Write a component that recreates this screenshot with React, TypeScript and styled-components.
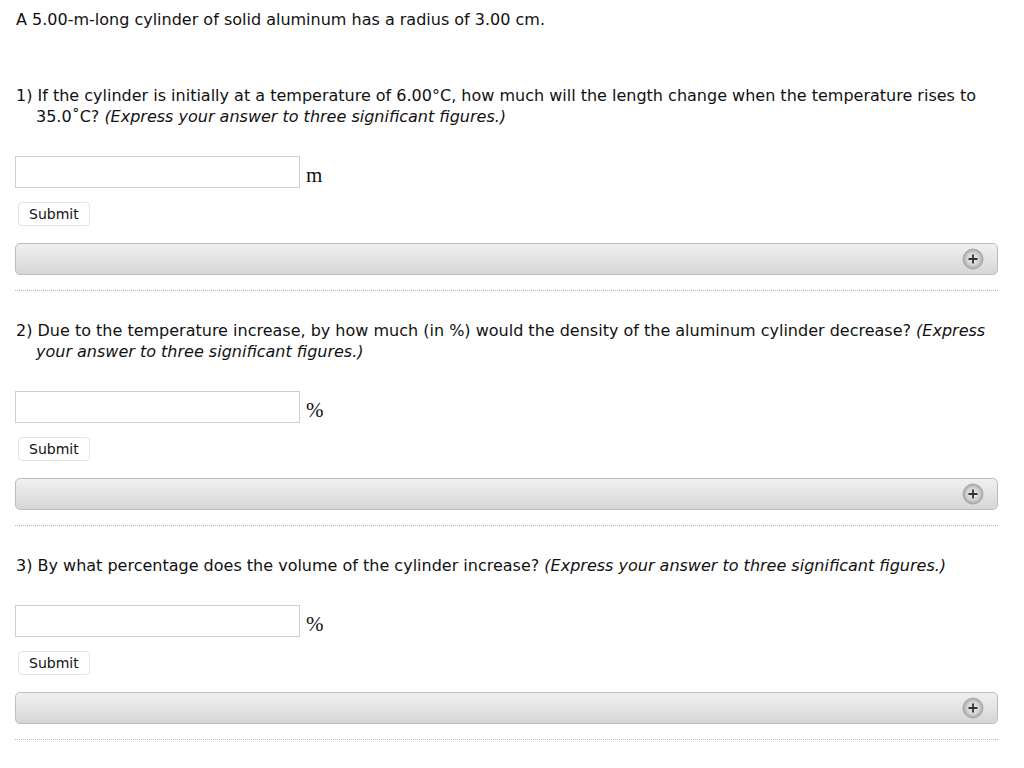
import React from "react";
import styled, { createGlobalStyle } from "styled-components";

const Global = createGlobalStyle`
  html, body { margin: 0; padding: 0; background: #fff; }
  body { font-family: "DejaVu Sans", Verdana, sans-serif; color: #111; }
`;

const Page = styled.div`
  width: 983px;
  padding: 9px 0 0 15px;
  font-family: "DejaVu Sans", sans-serif;
  font-size: 16px;
`;

const Intro = styled.p`
  margin: 0 0 55px 1px;
  line-height: 21px;
`;

const Question = styled.section`
  display: flex;
  flex-direction: column;
`;

const Prompt = styled.p`
  margin: 0 0 29px 1px;
  padding-left: 20px;
  text-indent: -20px;
  line-height: 21px;
  em { font-style: italic; }
`;

const AnswerRow = styled.div`
  display: flex;
  align-items: center;
  gap: 6px;
`;

const Field = styled.input`
  width: 285px;
  height: 32px;
  box-sizing: border-box;
  border: 1px solid #cfcfcf;
  background: #fff;
  margin: 0;
`;

const Unit = styled.span`
  font-family: "Liberation Serif", serif;
  font-size: 21px;
  margin-top: 6px;
`;

const SubmitButton = styled.button`
  align-self: flex-start;
  margin: 14px 0 0 3px;
  height: 24px;
  padding: 0 10px;
  border: 1px solid #e2e2e2;
  border-radius: 4px;
  background: #fff;
  font-family: "DejaVu Sans", sans-serif;
  font-size: 14px;
  color: #111;
`;

const Bar = styled.div`
  margin-top: 17px;
  height: 32px;
  box-sizing: border-box;
  border: 1px solid #bdbdbd;
  border-radius: 5px;
  background: linear-gradient(#f0f0f0, #d6d6d6);
  display: flex;
  align-items: center;
  justify-content: flex-end;
  padding-right: 13px;
`;

const Divider = styled.hr`
  margin: 15px 0 29px;
  border: 0;
  border-top: 1px dotted #b5b5b5;
  height: 0;
`;

const PlusIcon = () => (
  <svg width="22" height="22" viewBox="0 0 22 22">
    <defs>
      <radialGradient id="pg" cx="50%" cy="50%" r="55%">
        <stop offset="0%" stopColor="#ededed" />
        <stop offset="55%" stopColor="#d4d4d4" />
        <stop offset="100%" stopColor="#9a9a9a" />
      </radialGradient>
    </defs>
    <circle cx="11" cy="11" r="10" fill="url(#pg)" stroke="#aaa" strokeWidth="1" />
    <path d="M11 6.5v9M6.5 11h9" stroke="#333" strokeWidth="1.8" />
  </svg>
);

const items: { prompt: React.ReactNode; unit: string }[] = [
  {
    prompt: (
      <>
        1) If the cylinder is initially at a temperature of 6.00°C, how much will the length change when the temperature rises to
        35.0˚C? <em>(Express your answer to three significant figures.)</em>
      </>
    ),
    unit: "m",
  },
  {
    prompt: (
      <>
        2) Due to the temperature increase, by how much (in %) would the density of the aluminum cylinder decrease?{" "}
        <em>(Express your answer to three significant figures.)</em>
      </>
    ),
    unit: "%",
  },
  {
    prompt: (
      <>
        3) By what percentage does the volume of the cylinder increase?{" "}
        <em>(Express your answer to three significant figures.)</em>
      </>
    ),
    unit: "%",
  },
];

export default function App() {
  return (
    <>
      <Global />
      <Page>
        <Intro>A 5.00-m-long cylinder of solid aluminum has a radius of 3.00 cm.</Intro>
        {items.map((it, i) => (
          <Question key={i}>
            <Prompt>{it.prompt}</Prompt>
            <AnswerRow>
              <Field type="text" />
              <Unit>{it.unit}</Unit>
            </AnswerRow>
            <SubmitButton>Submit</SubmitButton>
            <Bar>
              <PlusIcon />
            </Bar>
            <Divider />
          </Question>
        ))}
      </Page>
    </>
  );
}
